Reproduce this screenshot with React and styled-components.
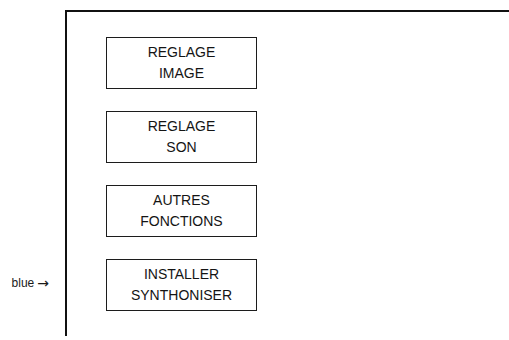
import styled, { createGlobalStyle } from "styled-components";

const menuItems = [
  { id: 1, lines: ["REGLAGE", "IMAGE"] },
  { id: 2, lines: ["REGLAGE", "SON"] },
  { id: 3, lines: ["AUTRES", "FONCTIONS"] },
  { id: 4, lines: ["INSTALLER", "SYNTHONISER"], note: "blue" },
];

const GlobalStyle = createGlobalStyle`
  html, body {
    margin: 0;
    padding: 0;
    background: #fff;
  }
  body {
    width: 509px;
    height: 340px;
    overflow: hidden;
    font-family: "Liberation Sans", Arial, sans-serif;
    color: #141414;
  }
`;

const Sheet = styled.div`
  display: flex;
  flex-direction: column;
  padding-top: 10px;
`;

const Row = styled.div`
  display: flex;
`;

const Note = styled.div`
  width: 65px;
  box-sizing: border-box;
  display: flex;
  align-items: center;
  justify-content: flex-end;
  gap: 3px;
  padding: ${(p) => p.$gap}px 16px 4px 0;
  font-size: 12px;
  color: #1a1a1a;
`;

const Slot = styled.div`
  flex: 1;
  border-left: 2px solid #111;
  border-top: ${(p) => (p.$top ? "2px solid #111" : "none")};
  height: ${(p) => (p.$height ? `${p.$height}px` : "auto")};
  padding: ${(p) => p.$gap || 0}px 0 0 39px;
`;

const MenuBox = styled.div`
  width: 151px;
  height: 52px;
  box-sizing: border-box;
  border: 1px solid #1c1c1c;
  display: flex;
  flex-direction: column;
  align-items: center;
  justify-content: center;
  font-size: 14px;
  line-height: 21px;
  padding-bottom: 1px;
`;

const Arrow = styled.span`
  font-family: "DejaVu Sans", sans-serif;
  font-size: 14px;
  line-height: 1;
`;

const App = () => (
  <>
    <GlobalStyle />
    <Sheet>
      <Row>
        <Note $gap={0} />
        <Slot $top $height={25} />
      </Row>
      {menuItems.map((item, i) => (
        <Row key={item.id}>
          <Note $gap={i === 0 ? 0 : 22}>
            {item.note && (
              <>
                <span>{item.note}</span>
                <Arrow>→</Arrow>
              </>
            )}
          </Note>
          <Slot $gap={i === 0 ? 0 : 22}>
            <MenuBox>
              {item.lines.map((line) => (
                <span key={line}>{line}</span>
              ))}
            </MenuBox>
          </Slot>
        </Row>
      ))}
      <Row>
        <Note $gap={0} />
        <Slot $height={25} />
      </Row>
    </Sheet>
  </>
);

export default App;
